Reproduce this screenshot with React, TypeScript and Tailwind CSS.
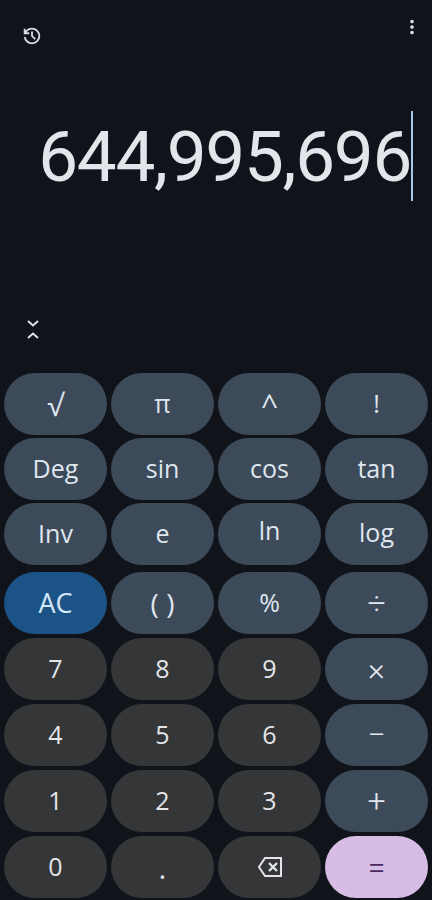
import { MdMoreVert } from "react-icons/md";

const sci = "bg-[#3d4a5a] text-[#dfe6ee]";
const dark = "bg-[#343638] text-[#e3e5e8]";
const op = "bg-[#3d4a5a] text-[#e3e8ee] font-['Roboto',sans-serif] font-light text-[32px]";

const Key = ({ className, children }: { className: string; children: React.ReactNode }) => (
  <button className={`h-[62px] rounded-[31px] flex items-center justify-center text-[25px] ${className}`}>
    {children}
  </button>
);

const App = () => {
  return (
    <div className="w-[432px] h-[900px] overflow-hidden bg-[#10141a] flex flex-col font-['Open_Sans',sans-serif]">
      <div className="h-[373px] flex flex-col">
        <div className="flex justify-between pl-[21px] pr-[10px] pt-[17px]">
          <svg className="mt-[8px]" width="22" height="22" viewBox="0 0 24 24" fill="#d9dde2">
            <path d="M12 21q-3.45 0-6.012-2.288T3.05 13H5.1q.35 2.6 2.312 4.3T12 19q2.925 0 4.963-2.037T19 12q0-2.925-2.037-4.963T12 5q-1.725 0-3.225.8T6.25 8H9v2H3V4h2v2.35q1.275-1.6 3.113-2.475T12 3q3.75 0 6.375 2.625T21 12q0 3.75-2.625 6.375T12 21Zm2.8-4.8L11 12.4V7h2v4.6l3.2 3.2-1.4 1.4Z" />
          </svg>
          <MdMoreVert className="text-[#d9dde2] text-[22px] -mt-[1px] -mr-[1px]" />
        </div>
        <div className="flex justify-end items-center pr-[19px] mt-[63px]">
          <span className="font-['Roboto',sans-serif] text-[71px] leading-[90px] tracking-[-1.3px] text-[#e2e6ea] pt-[2px]">
            644,995,696
          </span>
          <span className="w-[2px] h-[90px] bg-[#a8c7ea]" />
        </div>
        <div className="pl-[26px] mt-[116px]">
          <svg width="14" height="24" viewBox="0 0 14 24" fill="none" stroke="#dfe3e8" strokeWidth="2">
            <path d="M2 3l5 4.5 5-4.5" />
            <path d="M2 20l5-4.5 5 4.5" />
          </svg>
        </div>
      </div>
      <div className="grid grid-cols-4 gap-x-[4px] gap-y-[3px] px-[4px]">
        <Key className={`${sci} text-[30px]`}>√</Key>
        <Key className={sci}>π</Key>
        <Key className={`${sci} text-[30px]`}>^</Key>
        <Key className={sci}>!</Key>
        <Key className={sci}>Deg</Key>
        <Key className={sci}>sin</Key>
        <Key className={sci}>cos</Key>
        <Key className={sci}>tan</Key>
        <Key className={sci}>Inv</Key>
        <Key className={sci}>e</Key>
        <Key className={`${sci} pb-[6px]`}>ln</Key>
        <Key className={`${sci} pb-[2px]`}>log</Key>
      </div>
      <div className="grid grid-cols-4 gap-x-[4px] gap-y-[4px] px-[4px] mt-[7px]">
        <Key className="bg-[#1b5386] text-[#d5e6f7] text-[27px]">AC</Key>
        <Key className={`${sci} text-[28px]`}>( )</Key>
        <Key className={sci}>%</Key>
        <Key className={op}>÷</Key>
        <Key className={dark}>7</Key>
        <Key className={dark}>8</Key>
        <Key className={dark}>9</Key>
        <Key className={op}>×</Key>
        <Key className={dark}>4</Key>
        <Key className={dark}>5</Key>
        <Key className={dark}>6</Key>
        <Key className={op}>−</Key>
        <Key className={dark}>1</Key>
        <Key className={dark}>2</Key>
        <Key className={dark}>3</Key>
        <Key className={op}>+</Key>
        <Key className={dark}>0</Key>
        <Key className={`${dark} text-[30px]`}>.</Key>
        <Key className={dark}>
          <svg width="26" height="22" viewBox="0 0 26 22" fill="none" stroke="#e3e5e8" strokeWidth="2">
            <path d="M8 2h16v18H8l-6-9z" />
            <path d="M12 7l8 8M20 7l-8 8" strokeWidth="2.4" />
          </svg>
        </Key>
        <Key className="bg-[#d7bde6] text-[#4a2a5e] font-['Roboto',sans-serif] font-light text-[32px]">=</Key>
      </div>
    </div>
  );
};

export default App;
